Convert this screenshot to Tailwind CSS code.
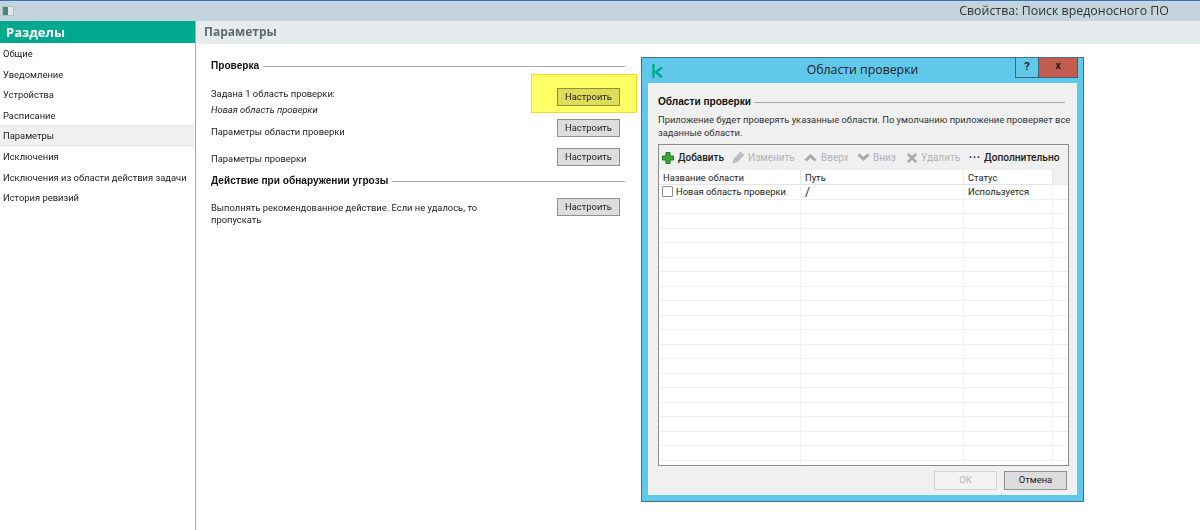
<!DOCTYPE html>
<html lang="ru">
<head>
  <meta charset="UTF-8" />
  <title>Свойства: Поиск вредоносного ПО</title>
  <script src="https://cdn.jsdelivr.net/npm/@tailwindcss/browser@4"></script>
</head>
<body class="w-[1200px] h-[530px] overflow-hidden bg-white relative font-['Roboto','Liberation_Sans',sans-serif] text-[9.4px] text-[#222]">
  <!-- window title -->
  <div class="h-[21px] bg-[#c3d4dc] border-t border-[#3a74b8] flex items-center justify-between pl-[2px] pr-[31px]">
    <div class="w-[12px] h-[10px] bg-[#dfe5e8] border border-[#b4bfc4] flex">
      <div class="w-[5px] bg-[#3f8f78]"></div>
    </div>
    <span class="text-[12.4px] text-[#333] font-['Open_Sans',sans-serif]">Свойства: Поиск вредоносного ПО</span>
  </div>

  <div class="flex h-[509px]">
    <!-- sidebar -->
    <aside class="w-[196px] border-r border-[#a9a9a9] shrink-0">
      <div class="h-[22px] bg-[#00a88e] text-white font-bold text-[13px] leading-[22px] pl-[6px] font-['Open_Sans',sans-serif]">Разделы</div>
      <ul class="pr-px whitespace-nowrap">
        <li class="h-[20.6px] leading-[22px] pl-[3px]">Общие</li>
        <li class="h-[20.6px] leading-[22px] pl-[3px]">Уведомление</li>
        <li class="h-[20.6px] leading-[22px] pl-[3px]">Устройства</li>
        <li class="h-[20.6px] leading-[22px] pl-[3px]">Расписание</li>
        <li class="h-[20.6px] leading-[20px] pl-[3px] bg-[#f0f0f0] border-y border-[#e2e2e2]">Параметры</li>
        <li class="h-[20.6px] leading-[22px] pl-[3px]">Исключения</li>
        <li class="h-[20.6px] leading-[22px] pl-[3px]">Исключения из области действия задачи</li>
        <li class="h-[20.6px] leading-[22px] pl-[3px]">История ревизий</li>
      </ul>
    </aside>

    <!-- settings -->
    <main class="flex-1">
      <div class="h-[23px] bg-[#e6ebed] text-[#5d6a70] font-bold text-[12px] leading-[22px] pl-[8px] font-['Open_Sans',sans-serif]">Параметры</div>
      <div class="w-[414px] ml-[15px] pt-[15px]">
        <div class="flex items-center gap-[4px] h-[14px]">
          <b class="text-[10.1px] text-[#111] font-['Liberation_Sans',sans-serif]">Проверка</b>
          <div class="flex-1 h-px bg-[#a9a9a9]"></div>
        </div>
        <div class="flex justify-between pr-[5px]">
          <div class="pt-[13px]">
            <p class="h-[16px] leading-[16px]">Задана 1 область проверки:</p>
            <p class="h-[15px] leading-[16px] italic">Новая область проверки</p>
          </div>
          <button class="w-[63px] h-[18px] mt-[15px] pt-px bg-[#dddddd] border border-[#8f8f8f]">Настроить</button>
        </div>
        <div class="flex justify-between items-start mt-[2px] pr-[5px] h-[18px]">
          <span class="pt-[7px] leading-[12px]">Параметры области проверки</span>
          <button class="w-[63px] h-[18px] pt-px bg-[#dddddd] border border-[#8f8f8f]">Настроить</button>
        </div>
        <div class="flex justify-between items-start mt-[11px] pr-[5px] h-[18px]">
          <span class="pt-[5px] leading-[12px]">Параметры проверки</span>
          <button class="w-[63px] h-[18px] pt-px bg-[#dddddd] border border-[#8f8f8f]">Настроить</button>
        </div>
        <div class="flex items-center gap-[4px] h-[14px] mt-[8px]">
          <b class="text-[10.1px] text-[#111] font-['Liberation_Sans',sans-serif]">Действие при обнаружении угрозы</b>
          <div class="flex-1 h-px bg-[#a9a9a9]"></div>
        </div>
        <div class="flex justify-between mt-[10px] pr-[5px]">
          <p class="w-[280px] pt-[4px] leading-[12px]">Выполнять рекомендованное действие. Если не удалось, то пропускать</p>
          <button class="w-[63px] h-[18px] pt-px bg-[#dddddd] border border-[#8f8f8f]">Настроить</button>
        </div>
      </div>
    </main>
  </div>

  <!-- yellow callout over the first button -->
  <div class="absolute left-[531px] top-[74px] w-[106px] h-[39px] bg-[#ffff66] border border-[#ffd52b] mix-blend-multiply"></div>

  <!-- dialog window -->
  <section class="absolute left-[641px] top-[57px] w-[443px] h-[445px] bg-[#60c8ea] border border-[#4d6d7c] flex flex-col">
    <header class="h-[25px] shrink-0 relative flex items-center justify-center">
      <svg class="absolute left-[10px] top-[5px]" width="11" height="15" viewBox="0 0 11 15"><path d="M1.500 1v14M10 4.500 4 9l6 5.500" fill="none" stroke="#00a88e" stroke-width="2.400"/></svg>
      <span class="text-[12.3px] text-[#222] font-['Open_Sans',sans-serif]">Области проверки</span>
      <div class="absolute right-[5px] top-0 flex">
        <div class="w-[24px] h-[20px] border-x border-b border-[#3f6274] text-center font-bold text-[11px] leading-[17px]">?</div>
        <div class="w-[39px] h-[20px] bg-[#c25b50] border-r border-b border-[#3f6274] text-center font-bold text-[11px] leading-[16px]">x</div>
      </div>
    </header>
    <div class="flex-1 mx-[6px] mb-[6px] bg-[#f0f0f0] px-[10px] flex flex-col">
      <div class="flex items-center gap-[3px] h-[14px] mt-[12px] w-[407px]">
        <b class="text-[10.1px] text-[#111] font-['Liberation_Sans',sans-serif]">Области проверки</b>
        <div class="flex-1 h-px bg-[#a9a9a9]"></div>
      </div>
      <p class="mt-[5px] leading-[12.5px] h-[24px] w-[413px] text-[#333]">Приложение будет проверять указанные области. По умолчанию приложение проверяет все заданные области.</p>

      <div class="mt-[6px] h-[322px] w-[411px] border border-[#8c8c8c] bg-white flex flex-col">
        <div class="h-[25px] shrink-0 bg-[#f0f0f0] flex items-center pl-[3px] whitespace-nowrap text-[10px]">
          <svg width="12" height="12" viewBox="0 0 12 12"><path d="M4 0.500h4v3.500h3.500v4H8v3.500H4V8H0.500V4H4z" fill="#39a935" stroke="#1f7d24"/></svg>
          <span class="ml-[4px] w-[54px] font-medium text-[#222]">Добавить</span>
          <svg width="13" height="13" viewBox="0 0 13 13"><path d="M0.500 12.500l1-4.500 7-7.500 4 3.500-7 7z" fill="#bdbdbd"/></svg>
          <span class="ml-[3px] w-[56px] text-[#b3b3b3]">Изменить</span>
          <svg width="13" height="9" viewBox="0 0 13 9"><path d="M0.500 6.500 6.500 1l6 5.500-2 2L6.500 5l-4 3.500z" fill="#a9a9a9"/></svg>
          <span class="ml-[4px] w-[36px] text-[#b3b3b3]">Вверх</span>
          <svg width="13" height="9" viewBox="0 0 13 9"><path d="M0.500 2.500 6.500 8l6-5.500-2-2L6.500 4l-4-3.500z" fill="#a9a9a9"/></svg>
          <span class="ml-[3px] w-[33px] text-[#b3b3b3]">Вниз</span>
          <svg width="12" height="12" viewBox="0 0 13 13"><path d="M1 3l2-2 3.500 3.500L10 1l2 2-3.500 3.500L12 10l-2 2-3.500-3.500L3 12l-2-2 3.500-3.500z" fill="#a9a9a9"/></svg>
          <span class="ml-[3px] w-[48px] text-[#b3b3b3]">Удалить</span>
          <span class="font-bold text-[#222] tracking-[1px] w-[15px]">···</span>
          <span class="font-medium text-[#222] text-[10.2px]">Дополнительно</span>
        </div>
        <div class="grid grid-cols-[142px_163px_89px_1fr] h-[15px] shrink-0 border-b border-[#e4e4e4] leading-[15px]">
          <div class="pl-[4px] border-r border-[#e8e8e8]">Название области</div>
          <div class="pl-[4px] border-r border-[#e8e8e8]">Путь</div>
          <div class="pl-[4px] border-r border-[#e8e8e8]">Статус</div>
          <div class="bg-[#f0f0f0]"></div>
        </div>
        <div class="flex-1 overflow-hidden grid grid-cols-[142px_163px_89px_1fr] auto-rows-[14.5px] leading-[14px] whitespace-nowrap">
          <div class="pl-[3px] border-r border-b border-[#f0f0f0] flex items-center gap-[3px]"><span class="w-[11px] h-[11px] border border-[#8f8f8f] rounded-[1px] bg-white"></span>Новая область проверки</div>
          <div class="pl-[4px] border-r border-b border-[#f0f0f0] text-[12px]">/</div>
          <div class="pl-[4px] border-r border-b border-[#f0f0f0]">Используется</div>
          <div class="border-b border-[#f0f0f0]"></div>
          <div id="rows" class="contents"></div>
        </div>
      </div>

      <div class="flex justify-end gap-[7px] mt-[5px] w-[409px]">
        <button disabled class="w-[63px] h-[19px] bg-[#f3f3f3] border border-[#d4d4d4] text-[#b0b0b0]">ОК</button>
        <button class="w-[63px] h-[19px] bg-[#dddddd] border border-[#8f8f8f]">Отмена</button>
      </div>
    </div>
  </section>

  <script>
    // empty grid rows of the list
    const rows = document.getElementById("rows");
    for (let i = 0; i < 84; i++) {
      const cell = document.createElement("div");
      cell.className = i % 4 === 3 ? "border-b border-[#f0f0f0]" : "border-r border-b border-[#f0f0f0]";
      rows.appendChild(cell);
    }
  </script>
</body>
</html>
